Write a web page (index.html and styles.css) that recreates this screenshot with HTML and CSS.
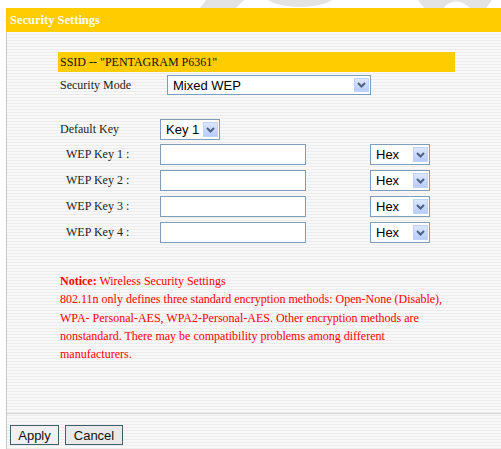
FILE: index.html
```html
<!DOCTYPE html>
<html>
<head>
<meta charset="utf-8">
<title>Security Settings</title>
<link rel="stylesheet" href="styles.css">
</head>
<body>
<svg class="watermark" width="501" height="8" viewBox="0 0 501 8" aria-hidden="true">
  <polygon points="206,0 244,0 236,8 200,8" fill="#e3e3e3"/>
  <ellipse cx="300" cy="-6" rx="36" ry="13" fill="#e3e3e3"/>
  <path d="M418 0 H492 L486 8 H470 Q462 0 452 2 Q446 4 444 8 H424 Z" fill="#e3e3e3"/>
</svg>
<div class="panel">
  <div class="panel-title">Security Settings</div>
  <div class="panel-body">
    <form class="settings">
      <div class="ssid-bar">SSID -- "PENTAGRAM P6361"</div>

      <div class="row mode-row">
        <label class="lbl mode-lbl">Security Mode</label>
        <span class="combo combo-mode">
          <select><option>Mixed WEP</option></select>
          <span class="combo-btn"><svg width="9" height="6" viewBox="0 0 9 6"><path d="M1 1 L4.5 4.5 L8 1" fill="none" stroke="#4d6185" stroke-width="2"/></svg></span>
        </span>
      </div>

      <div class="row default-row">
        <label class="lbl default-lbl">Default Key</label>
        <span class="combo combo-small">
          <select><option>Key 1</option></select>
          <span class="combo-btn"><svg width="9" height="6" viewBox="0 0 9 6"><path d="M1 1 L4.5 4.5 L8 1" fill="none" stroke="#4d6185" stroke-width="2"/></svg></span>
        </span>
      </div>

      <div class="keys">
        <div class="row key-row">
          <label class="lbl key-lbl">WEP Key 1 :</label>
          <input class="key-input" type="text">
          <span class="combo combo-small combo-hex">
            <select><option>Hex</option></select>
            <span class="combo-btn"><svg width="9" height="6" viewBox="0 0 9 6"><path d="M1 1 L4.5 4.5 L8 1" fill="none" stroke="#4d6185" stroke-width="2"/></svg></span>
          </span>
        </div>
        <div class="row key-row">
          <label class="lbl key-lbl">WEP Key 2 :</label>
          <input class="key-input" type="text">
          <span class="combo combo-small combo-hex">
            <select><option>Hex</option></select>
            <span class="combo-btn"><svg width="9" height="6" viewBox="0 0 9 6"><path d="M1 1 L4.5 4.5 L8 1" fill="none" stroke="#4d6185" stroke-width="2"/></svg></span>
          </span>
        </div>
        <div class="row key-row">
          <label class="lbl key-lbl">WEP Key 3 :</label>
          <input class="key-input" type="text">
          <span class="combo combo-small combo-hex">
            <select><option>Hex</option></select>
            <span class="combo-btn"><svg width="9" height="6" viewBox="0 0 9 6"><path d="M1 1 L4.5 4.5 L8 1" fill="none" stroke="#4d6185" stroke-width="2"/></svg></span>
          </span>
        </div>
        <div class="row key-row">
          <label class="lbl key-lbl">WEP Key 4 :</label>
          <input class="key-input" type="text">
          <span class="combo combo-small combo-hex">
            <select><option>Hex</option></select>
            <span class="combo-btn"><svg width="9" height="6" viewBox="0 0 9 6"><path d="M1 1 L4.5 4.5 L8 1" fill="none" stroke="#4d6185" stroke-width="2"/></svg></span>
          </span>
        </div>
      </div>

      <p class="notice"><b>Notice:</b> Wireless Security Settings<br>802.11n only defines three standard encryption methods: Open-None (Disable), WPA- Personal-AES, WPA2-Personal-AES. Other encryption methods are nonstandard. There may be compatibility problems among different manufacturers.</p>
    </form>

    <div class="actions">
      <button type="button" class="btn btn-apply">Apply</button>
      <button type="button" class="btn">Cancel</button>
    </div>
  </div>
</div>
</body>
</html>
```

FILE: styles.css
```css
html, body {
  margin: 0;
  padding: 0;
  background: #ffffff;
}

body {
  position: relative;
  padding-top: 8px;
  height: 441px;
  overflow: hidden;
  font-family: "Liberation Serif", "Times New Roman", serif;
  font-size: 12px;
  color: #111;
}

/* faint logo artwork peeking above the title bar */
.watermark {
  position: absolute;
  left: 0;
  top: 0;
}

.panel {
  margin-left: 6px;
}

.panel-title {
  height: 24px;
  line-height: 25px;
  padding-left: 4px;
  background: #ffcc00;
  color: #ffffff;
  font-weight: bold;
  font-size: 12.5px;
}

.panel-body {
  border-left: 1px solid #c9c9c9;
  min-height: 420px;
  background: repeating-linear-gradient(to bottom, #f8f8f8 0, #f8f8f8 2px, #ececec 2px, #ececec 3px);
}

.settings {
  margin: 0 0 0 51px;
  padding-top: 20px;
  width: 397px;
}

.ssid-bar {
  height: 20px;
  line-height: 20px;
  padding-left: 2px;
  background: #ffcc00;
  color: #111;
}

.row {
  display: flex;
  align-items: center;
}

.lbl {
  flex: none;
  color: #222;
}

.mode-row {
  margin-top: 3px;
  padding-left: 2px;
}

.mode-lbl {
  width: 107px;
}

.default-row {
  margin-top: 24px;
  padding-left: 2px;
}

.default-lbl {
  width: 100px;
}

.keys {
  margin-top: 4px;
  display: flex;
  flex-direction: column;
  gap: 5px;
}

.key-row {
  padding-left: 8px;
}

.key-lbl {
  width: 94px;
}

.key-input {
  box-sizing: border-box;
  width: 146px;
  height: 21px;
  margin: 0;
  border: 1px solid #7f9db9;
  background: #ffffff;
  padding: 0 3px;
}

/* XP-style drop-down: native select with a painted button on top */
.combo {
  position: relative;
  display: inline-block;
  flex: none;
}

.combo select {
  -webkit-appearance: none;
  appearance: none;
  box-sizing: border-box;
  display: block;
  margin: 0;
  height: 21px;
  border: 1px solid #7f9db9;
  border-radius: 0;
  background: #ffffff;
  color: #000;
  font-family: "Liberation Sans", Arial, sans-serif;
  font-size: 13px;
  padding: 0 0 0 5px;
}

.combo-mode select {
  width: 204px;
  height: 20px;
}

.combo-small select {
  width: 60px;
}

.combo-hex {
  margin-left: 64px;
}

.combo-btn {
  position: absolute;
  top: 3px;
  bottom: 3px;
  right: 2px;
  width: 15px;
  box-sizing: border-box;
  border: 1px solid #c1d2f8;
  background: linear-gradient(#dce7ff, #b9cdfb);
  display: flex;
  align-items: center;
  justify-content: center;
  pointer-events: none;
}

.notice {
  margin: 29px 0 0 2px;
  color: #ff0000;
  line-height: 18.33px;
}

.notice b {
  font-weight: bold;
}

.actions {
  margin-top: 49px;
  border-top: 1px solid #d2d2d2;
  padding: 11px 0 0 3px;
  display: flex;
  gap: 6px;
}

.btn {
  box-sizing: border-box;
  height: 20px;
  margin: 0;
  padding: 2px 0 0;
  border: 1px solid #3f5f6c;
  border-radius: 0;
  background: #e9e9e9;
  color: #111;
  font-family: "Liberation Sans", Arial, sans-serif;
  font-size: 13px;
  line-height: 16px;
}

.btn-apply {
  width: 49px;
  background: #f0f0f0;
}

.btn + .btn {
  width: 58px;
}
```
